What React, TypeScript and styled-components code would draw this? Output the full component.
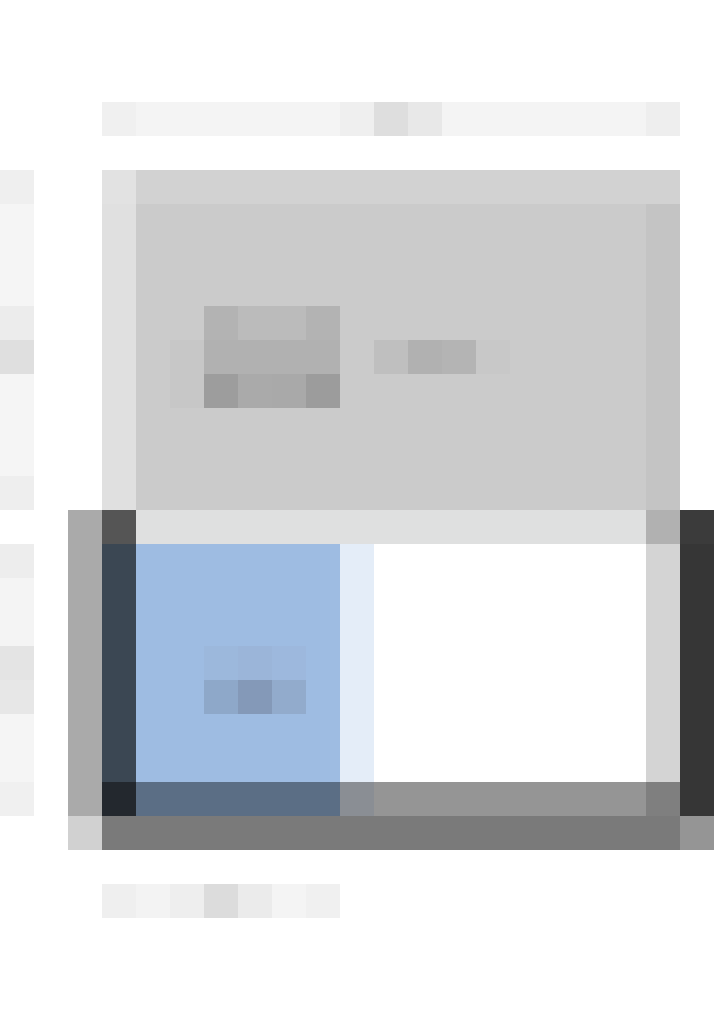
import React from "react";
import styled, { createGlobalStyle } from "styled-components";

const Global = createGlobalStyle`
  html, body { margin: 0; padding: 0; background: #ffffff; }
  body { font-family: "Liberation Sans", Arial, sans-serif; }
`;

const U = 34;

const Page = styled.div`
  display: flex;
  flex-direction: column;
  gap: ${U}px;
  padding-top: ${3 * U}px;
  width: 720px;
  min-height: 1017px;
  box-sizing: border-box;
  background: #ffffff;
`;

const HeadingBar = styled.div`
  display: flex;
  height: ${U}px;
  margin-left: ${3 * U}px;
  width: ${17 * U}px;
`;

const Segment = styled.span<{ $w: number; $c: string }>`
  display: block;
  flex: none;
  width: ${(p) => p.$w}px;
  height: 100%;
  background: ${(p) => p.$c};
`;

const Workspace = styled.div`
  display: flex;
  align-items: flex-start;
`;

const Sidebar = styled.nav`
  display: flex;
  flex-direction: column;
  width: ${U}px;
  flex: none;
`;

const SideItem = styled.span<{ $h: number; $c: string }>`
  display: block;
  height: ${(p) => p.$h}px;
  background: ${(p) => p.$c};
`;

const MainColumn = styled.main`
  display: flex;
  flex-direction: column;
  margin-left: ${U}px;
  width: ${19 * U}px;
`;

const Card = styled.section`
  display: flex;
  margin-left: ${U}px;
  width: ${17 * U}px;
  height: ${10 * U}px;
`;

const CardRail = styled.div`
  width: ${U}px;
  flex: none;
  background: linear-gradient(#e2e2e2 0 ${U}px, #e0e0e0 ${U}px);
`;

const CardBody = styled.div`
  flex: 1;
  display: flex;
  flex-direction: column;
`;

const CardHeader = styled.div`
  height: ${U}px;
  background: #d2d2d2;
`;

const CardMain = styled.div`
  flex: 1;
  display: flex;
`;

const CardContent = styled.div`
  flex: 1;
  display: flex;
  align-items: flex-start;
  gap: ${U}px;
  padding: ${3 * U}px 0 0 ${U}px;
  box-sizing: border-box;
  height: 100%;
  background: #cbcbcb;
`;

const CardRightRail = styled.div`
  width: ${U}px;
  background: #c4c4c4;
`;

const TitleLine = styled.div`
  display: flex;
  height: ${U}px;
  margin-top: ${U}px;
`;

const Selected = styled.section`
  display: grid;
  grid-template-columns: ${U}px ${U}px ${6 * U}px ${U}px ${8 * U}px ${U}px ${U}px;
  grid-template-rows: ${U}px ${7 * U}px ${U}px ${U}px;
  width: ${19 * U}px;
  height: ${10 * U}px;
`;

const Tile = styled.div<{ $c: string; $span?: number }>`
  background: ${(p) => p.$c};
  grid-column: span ${(p) => p.$span ?? 1};
`;

const Thumb = styled.div`
  background: #9ebce2;
  padding: ${3 * U}px 0 0 ${2 * U}px;
  box-sizing: border-box;
`;

const Caption = styled.footer`
  display: flex;
  height: ${U}px;
  margin-left: ${3 * U}px;
`;

type Px = [number, number, string];

const PixelIcon: React.FC<{ w: number; h: number; px: Px[] }> = ({ w, h, px }) => (
  <svg width={w * U} height={h * U} viewBox={`0 0 ${w} ${h}`} shapeRendering="crispEdges" style={{ display: "block", flex: "none" }}>
    {px.map(([x, y, c], i) => (
      <rect key={i} x={x} y={y} width={1} height={1} fill={c} />
    ))}
  </svg>
);

const grayIcon: Px[] = [
  [1, 0, "#b3b3b3"], [2, 0, "#bbbbbb"], [3, 0, "#bbbbbb"], [4, 0, "#b3b3b3"],
  [0, 1, "#c7c7c7"], [1, 1, "#b1b1b1"], [2, 1, "#b1b1b1"], [3, 1, "#b1b1b1"], [4, 1, "#b1b1b1"],
  [0, 2, "#c7c7c7"], [1, 2, "#9d9d9d"], [2, 2, "#aaaaaa"], [3, 2, "#a9a9a9"], [4, 2, "#9c9c9c"],
];

const blueIcon: Px[] = [
  [0, 0, "#9cb8dc"], [1, 0, "#9bb5d9"], [2, 0, "#9db8dd"],
  [0, 1, "#8ea8c9"], [1, 1, "#8499b8"], [2, 1, "#92abcc"],
];

const heading: [number, string][] = [
  [1, "#f0f0f0"], [6, "#f4f4f4"], [1, "#efefef"], [1, "#dedede"], [1, "#e8e8e8"], [6, "#f4f4f4"], [1, "#eeeeee"],
];

const sideItems: [number, string][] = [
  [1, "#efefef"], [3, "#f5f5f5"], [1, "#ececec"], [1, "#dfdfdf"], [3, "#f5f5f5"], [1, "#eeeeee"],
  [1, "#ffffff"], [1, "#ededed"], [2, "#f4f4f4"], [1, "#e4e4e4"], [1, "#e7e7e7"], [2, "#f5f5f5"], [1, "#f0f0f0"],
];

const title: [number, string][] = [
  [1, "#bfbfbf"], [1, "#b1b1b1"], [1, "#b4b4b4"], [1, "#c8c8c8"],
];

const caption: string[] = ["#efefef", "#f3f3f3", "#eeeeee", "#dcdcdc", "#ebebeb", "#f4f4f4", "#f0f0f0"];

export default function App() {
  return (
    <>
      <Global />
      <Page>
        <HeadingBar>
          {heading.map(([w, c], i) => (
            <Segment key={i} $w={w * U} $c={c} />
          ))}
        </HeadingBar>
        <Workspace>
          <Sidebar>
            {sideItems.map(([h, c], i) => (
              <SideItem key={i} $h={h * U} $c={c} />
            ))}
          </Sidebar>
          <MainColumn>
            <Card>
              <CardRail />
              <CardBody>
                <CardHeader />
                <CardMain>
                  <CardContent>
                    <PixelIcon w={5} h={3} px={grayIcon} />
                    <TitleLine>
                      {title.map(([w, c], i) => (
                        <Segment key={i} $w={w * U} $c={c} />
                      ))}
                    </TitleLine>
                  </CardContent>
                  <CardRightRail />
                </CardMain>
              </CardBody>
            </Card>
            <Selected>
              <Tile $c="#aaaaaa" />
              <Tile $c="#555555" />
              <Tile $c="#dfe0e0" $span={3} />
              <Tile $c="#b1b1b1" />
              <Tile $c="#3b3b3b" />

              <Tile $c="#aaaaaa" />
              <Tile $c="#3b4753" />
              <Thumb>
                <PixelIcon w={3} h={2} px={blueIcon} />
              </Thumb>
              <Tile $c="#e4edf8" />
              <Tile $c="#ffffff" />
              <Tile $c="#d4d4d4" />
              <Tile $c="#363636" />

              <Tile $c="#aaaaaa" />
              <Tile $c="#23282e" />
              <Tile $c="#5b6e85" />
              <Tile $c="#8a8e94" />
              <Tile $c="#959595" />
              <Tile $c="#7f7f7f" />
              <Tile $c="#363636" />

              <Tile $c="#d1d1d1" />
              <Tile $c="#7a7a7a" $span={5} />
              <Tile $c="#959595" />
            </Selected>
          </MainColumn>
        </Workspace>
        <Caption>
          {caption.map((c, i) => (
            <Segment key={i} $w={U} $c={c} />
          ))}
        </Caption>
      </Page>
    </>
  );
}
